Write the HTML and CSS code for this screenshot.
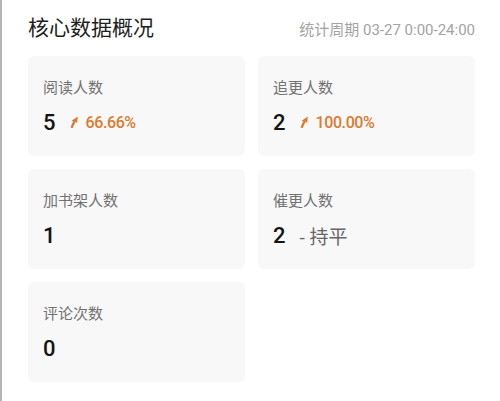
FILE: index.html
```html
<!DOCTYPE html>
<html lang="zh-CN">
<head>
    <meta charset="UTF-8">
    <meta name="viewport" content="width=device-width, initial-scale=1.0">
    <title>核心数据概况</title>
    <link rel="stylesheet" href="styles.css">
</head>
<body>
    <div class="overview">
        <div class="overview-header">
            <h2>核心数据概况</h2>
            <span class="period">统计周期 03-27 0:00-24:00</span>
        </div>
        <div class="stats">
            <div class="stat-card">
                <div class="label">阅读人数</div>
                <div class="value-row">
                    <span class="value">5</span>
                    <span class="trend up">
                        <svg class="arrow" viewBox="0 0 8 12" width="8" height="12"><path d="M0.6 11.8 C1.4 8.8 2.4 6.8 3.4 5.6 L1.6 4.8 L7.8 0.4 L7.2 7 L5.6 5.8 C4.6 7.6 3.6 9.6 2.8 12 Z" fill="#dc7a30"/></svg>
                        66.66%
                    </span>
                </div>
            </div>
            <div class="stat-card">
                <div class="label">追更人数</div>
                <div class="value-row">
                    <span class="value">2</span>
                    <span class="trend up">
                        <svg class="arrow" viewBox="0 0 8 12" width="8" height="12"><path d="M0.6 11.8 C1.4 8.8 2.4 6.8 3.4 5.6 L1.6 4.8 L7.8 0.4 L7.2 7 L5.6 5.8 C4.6 7.6 3.6 9.6 2.8 12 Z" fill="#dc7a30"/></svg>
                        100.00%
                    </span>
                </div>
            </div>
            <div class="stat-card">
                <div class="label">加书架人数</div>
                <div class="value-row">
                    <span class="value">1</span>
                </div>
            </div>
            <div class="stat-card">
                <div class="label">催更人数</div>
                <div class="value-row">
                    <span class="value">2</span>
                    <span class="trend flat">- 持平</span>
                </div>
            </div>
            <div class="stat-card">
                <div class="label">评论次数</div>
                <div class="value-row">
                    <span class="value">0</span>
                </div>
            </div>
        </div>
    </div>
</body>
</html>
```

FILE: styles.css
```css
* {
    margin: 0;
    padding: 0;
    box-sizing: border-box;
    font-family: "Noto Sans", "Noto Sans CJK SC", sans-serif;
}

body {
    background: white;
    border-left: 2px solid #b4b4b4;
    min-height: 100vh;
}

.overview {
    padding: 13px 25px 0 26px;
}

.overview-header {
    display: flex;
    justify-content: space-between;
    align-items: center;
    height: 28px;
    margin-bottom: 15px;
}

.overview-header h2 {
    font-size: 21px;
    font-weight: 400;
    color: #1f1f1f;
    line-height: 28px;
}

.period {
    font-family: Roboto, "Noto Sans CJK SC", sans-serif;
    font-size: 15px;
    color: #a3a3a3;
    margin-top: 2px;
}

.stats {
    display: grid;
    grid-template-columns: 1fr 1fr;
    column-gap: 13px;
    row-gap: 13px;
}

.stat-card {
    background: #f8f8f8;
    border-radius: 6px;
    height: 100px;
    padding: 20px 15px;
}

.label {
    font-size: 15px;
    line-height: 22px;
    color: #727272;
}

.value-row {
    display: flex;
    align-items: center;
    margin-top: 10px;
    height: 28px;
}

.value {
    font-family: Roboto, "Noto Sans", sans-serif;
    font-size: 22px;
    font-weight: 500;
    color: #141414;
    margin-right: 14px;
}

.trend {
    display: flex;
    align-items: center;
    font-family: Roboto, "Noto Sans CJK SC", sans-serif;
    font-size: 16px;
}

.trend.up {
    color: #dc7a30;
    font-weight: 500;
    letter-spacing: -0.4px;
}

.arrow {
    margin-right: 8px;
}

.trend.flat {
    font-size: 19px;
    color: #666;
}
```
